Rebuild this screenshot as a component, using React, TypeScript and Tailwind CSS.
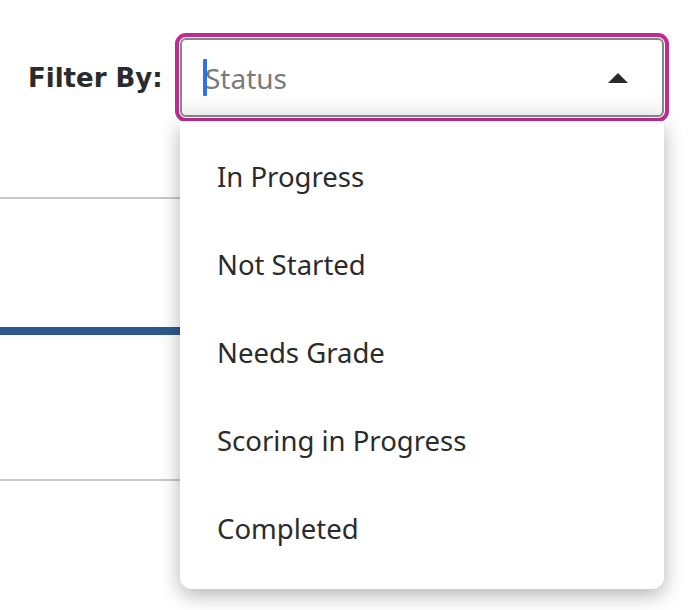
import React from "react";

const items = ["In Progress", "Not Started", "Needs Grade", "Scoring in Progress", "Completed"];

export default function App() {
  return (
    <div className="relative w-[696px] h-[610px] bg-white overflow-hidden" style={{ fontFamily: "'Noto Sans', sans-serif" }}>
      <div className="flex items-center pt-[38px] pl-[28px]">
        <div className="w-[152px] pt-[2px] text-[26px] font-bold text-[#2b2b2b]" style={{ fontFamily: "'DejaVu Sans', sans-serif" }}>
          Filter By:
        </div>
        <div className="relative w-[484px] h-[79px] border-2 border-[#878787] rounded-[6px] outline-4 outline-solid outline-[#c22a91] outline-offset-1 bg-gradient-to-b from-white from-70% to-[#f2f2f2] flex items-center pl-[21px] pr-[34px]">
          <span className="w-[4px] h-[37px] bg-[#2f6ff0] rounded-[1px]"></span>
          <span className="ml-[-2px] text-[28px] text-[#7a7a7a]">Status</span>
          <div className="ml-auto w-0 h-0 border-l-[10px] border-r-[10px] border-b-[10px] border-l-transparent border-r-transparent border-b-[#2a2a2a]"></div>
        </div>
      </div>
      <div className="mt-[80px] w-[400px] h-[2px] bg-[#c5c8cc]"></div>
      <div className="mt-[128px] w-[400px] h-[8px] bg-[#2c598e]"></div>
      <div className="mt-[144px] w-[400px] h-[2px] bg-[#c5c8cc]"></div>

      <div className="absolute left-[180px] top-[121px] w-[484px] h-[468px] bg-white rounded-b-[12px] shadow-[0_6px_20px_rgba(0,0,0,0.3)] pt-[12px]">
        {items.map((t) => (
          <div key={t} className="h-[88px] flex items-center pl-[37px] text-[27.5px] text-[#2b2b2b]">
            {t}
          </div>
        ))}
      </div>
    </div>
  );
}
